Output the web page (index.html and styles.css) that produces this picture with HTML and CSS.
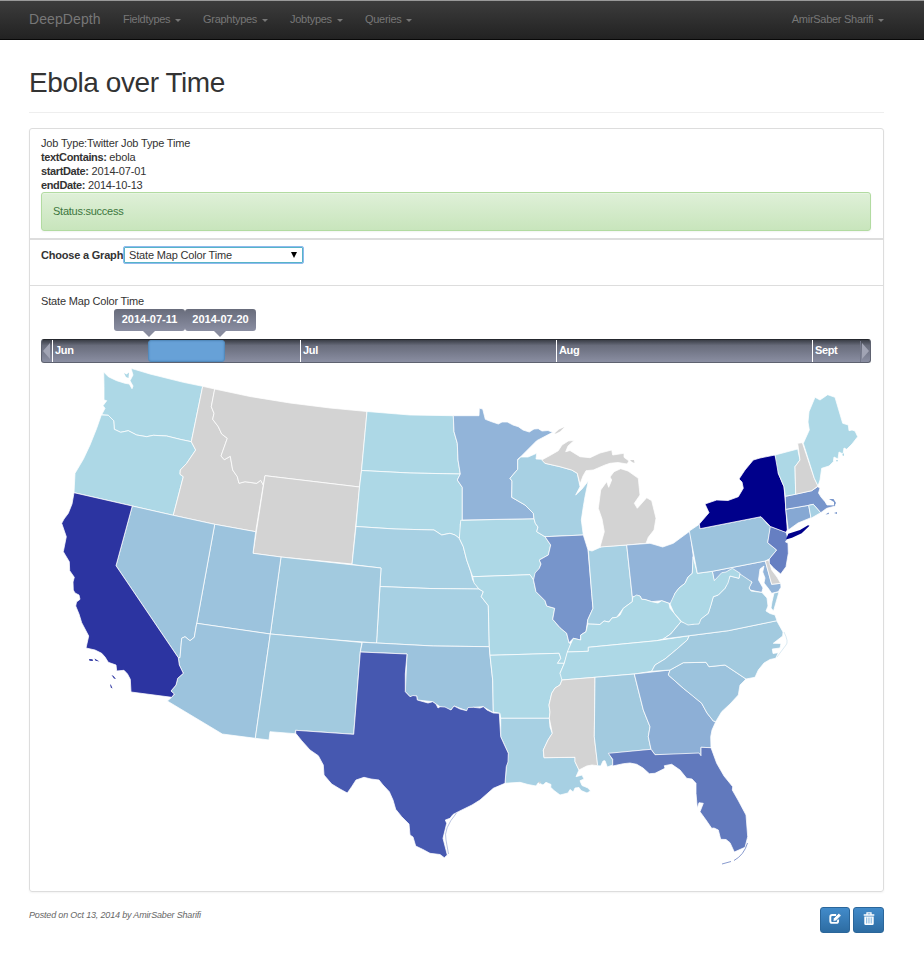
FILE: index.html
```html
<!DOCTYPE html>
<html lang="en">
<head>
<meta charset="utf-8">
<title>Ebola over Time</title>
<link rel="stylesheet" href="styles.css">
</head>
<body>
<nav class="navbar">
  <a class="brand">DeepDepth</a>
  <ul class="menu">
    <li class="m1">Fieldtypes <i class="caret"></i></li>
    <li class="m2">Graphtypes <i class="caret"></i></li>
    <li class="m3">Jobtypes <i class="caret"></i></li>
    <li>Queries <i class="caret"></i></li>
  </ul>
  <div class="user">AmirSaber Sharifi <i class="caret"></i></div>
</nav>
<main class="container">
  <header class="page-header"><h1>Ebola over Time</h1></header>
  <section class="panel">
    <div class="details">
      <div>Job Type:Twitter Job Type Time</div>
      <div><b>textContains:</b> ebola</div>
      <div><b>startDate:</b> 2014-07-01</div>
      <div><b>endDate:</b> 2014-10-13</div>
      <div class="alert">Status:success</div>
    </div>
    <div class="chooser">
      <b class="chooser-label">Choose a Graph</b>
      <div class="select"><span>State Map Color Time</span><i class="select-arrow"></i></div>
    </div>
    <div class="graph">
      <div class="graph-title">State Map Color Time</div>
      <div class="slider">
        <div class="tip tip-from">2014-07-11</div>
        <div class="tip tip-to">2014-07-20</div>
        <div class="track">
          <div class="arrow arrow-left"></div>
          <div class="month jun">Jun</div>
          <div class="month jul">Jul</div>
          <div class="month aug">Aug</div>
          <div class="month sept">Sept</div>
          <div class="arrow arrow-right"></div>
          <div class="range"></div>
        </div>
      </div>
      <svg class="map" viewBox="41 363 830 522" width="830" height="522">
        <path class="c0" d="M103.700 372L108.300 376.700 116.700 380.700 125 383.300 129.300 384 132 388.700 133 386 130 380.700 133 375 131 368.300 150 374 183.300 382.300 202.700 386.300 191.300 441.700 180 439.300 166.700 436 153.300 435.300 146.700 436.700 136.700 435 128.300 430.700 120.700 432.300 114.300 429.300 113.700 420.700 108.300 415.300 101.700 414.700 105 408.300 103 405.700 106.700 400.700 104 400 104 386.700Z"/>
        <path class="c0" d="M101.300 415L96.700 428.300 90 445 83.300 459.300 75 473.300 74 492.700 173.300 515.300 183.300 476.700 180 474.300 180.300 470 186.700 463.300 195.700 450 191.300 441.700 180 439.300 166.700 436 153.300 435.300 146.700 436.700 136.700 435 128.300 430.700 120.700 432.300 114.300 429.300 113.700 420.700 108.300 415.300Z"/>
        <path class="na" d="M202.700 386.300L214.700 389 211.300 406.700 214 413.300 212.700 419.300 218.300 426.700 221.700 434 227.300 438.300 221 456 224.300 459.700 230.300 456.300 232.700 470 237.300 476.700 239 483.300 245 481.700 256.700 483.300 260.700 480.300 263.300 485 255.700 531.700 214.700 524.300 173.300 515.300 183.300 476.700 180 474.300 180.300 470 186.700 463.300 195.700 450 191.300 441.700Z"/>
        <path class="na" d="M214.700 389L250 396.500 290 403 330 408 367 411.500 361.500 470.500 359.500 487 265 475.700 263.300 485 260.700 480.300 256.700 483.300 245 481.700 239 483.300 237.300 476.700 232.700 470 230.300 456.300 224.300 459.700 221 456 227.300 438.300 221.700 434 218.300 426.700 212.700 419.300 214 413.300 211.300 406.700Z"/>
        <path class="na" d="M265 475.700L359.500 487 352 564 281 557 253 553.300Z"/>
        <path class="c0" d="M367 411.500L410 415 453.300 415.700 454 431.700 457.300 443.300 458 460 460.300 474 410 473 361.500 470.500Z"/>
        <path class="c0" d="M361.500 470.500L410 473 460.300 474 457.300 480 462.300 487.300 462.300 520 460.300 524 460.700 531.700 459.300 538.300 455 535 450 533.300 441.700 535 434 530 395 529 356 526.500 359.500 487Z"/>
        <path class="c1" d="M356 526.500L395 529 434 530 441.700 535 450 533.300 455 535 459.300 538.300 463.300 546.700 466.700 560 470.700 571.700 472.700 580 479 589 430 588.500 380 586.500 381 568 352 564.500Z"/>
        <path class="c1" d="M380 586.500L430 588.500 479 589 483.300 591.700 481.300 596.700 488.300 605.700 489.300 646.700 433.300 646 376.500 643Z"/>
        <path class="c2" d="M281 557L381 568 376.500 643 330 639.500 270.300 634Z"/>
        <path class="c3" d="M214.700 524.300L255.700 531.700 253 553.300 281 557 270.300 634 196.700 623.300Z"/>
        <path class="c3" d="M132.300 506L173.300 515.300 214.700 524.300 196.700 623.300 194.300 637.300 190 640.700 185 636.700 181.700 638.300 180 657.700 178.300 657.700 116 565.700Z"/>
        <path class="c3" d="M196.700 623.300L270.300 634 255.300 738.300 222.300 734 167.300 701 171.700 697.300 174.300 694 171 691 176 685 177.700 678.300 183.300 673.300 179.300 665 178.300 657.700 180 657.700 181.700 638.300 185 636.700 190 640.700 194.300 637.300Z"/>
        <path class="ca" d="M74 492.700L132.300 506 116 565.700 178.300 657.700 179.300 665 183.300 673.300 177.700 678.300 176 685 171 691 174.300 694 171.700 697.300 131 692 130.300 679.300 127.500 674 124 670.300 116.700 671 116 665 108.300 662.300 105 657 101.700 653.300 95 650 86 648 88.700 636 81.700 622.700 79 614 75.700 606 76.500 602 80 599.300 79 595 75 593 73.300 590 73 582 74.300 577.300 69.700 570.700 69.300 561.700 63.300 551.700 66.300 536.700 61.700 523.300 64 519 68.300 513.300 72 504Z"/>
        <path class="c2" d="M270.300 634L330 639.500 362 642.500 360.300 652 353.700 734.300 295.700 730.300 295 733.700 270 731.700 269 740 255.300 738.300Z"/>
        <path class="c3" d="M362.300 642.300L376.500 643 433.300 646 489.300 646.700 490 655.300 492.700 680 493.300 712.700 483.300 706.700 473.300 707.300 466.700 710.700 454 706 451 710 440 706.700 432.700 701.700 417.300 700 416.700 696 410 696.700 405.300 691.700 407 654 360.300 652Z"/>
        <path class="c0" d="M460.700 520.300L534 518.700 535.300 523.300 538 527 536.700 531.700 545 536.700 550.700 545 548.300 555 539.300 560 541 564 539.300 568.300 533.300 580 530 574.700 472.700 576.700 466.700 560 463.300 546.700 459.300 538.300Z"/>
        <path class="c0" d="M472.700 576.700L530 574.700 533.500 580 536 591.700 545 600.700 546.700 606 554.700 608.300 552.700 619.300 560 627.700 566.700 633.300 569 642.700 570.700 644 567.300 653.300 564.300 663.300 557.300 663.300 560.700 658.300 559 653.300 490 655.300 489.300 646.700 488.300 605.700 481.300 596.700 483.300 591.700 479 589 474 583Z"/>
        <path class="c0" d="M490 655.300L559 653.300 560.700 658.300 557.300 663.300 564.300 663.300 560 673.300 563 676 562 680 560 685 555 688 551.700 693.300 549 705 550 712 549.300 718.300 500.700 718.300 500 713.300 493.300 712 492.700 680Z"/>
        <path class="c1" d="M500.700 718.300L549.300 718.300 550 727 552.300 733.300 548 740 543.300 750 544 757.700 575 757.300 575 761.700 579 770 576 776.700 582 775 584 779 580 780.700 582 785.500 588 788 590.500 791 587 793 581 790.500 579 787.500 575 788 573.300 792 570 789.500 568 793 560 795 554 790.500 550.700 787.300 551 784.500 546 782.300 543 785 538.300 782.700 536 786 528 784.500 520 782.300 505 783.300 506.300 766.700 508.300 753.300 500.700 736.700Z"/>
        <path class="tx" d="M360.300 652L407 654 405.300 674 405.300 691.700 410 696.700 413 695.500 416.700 696 417.300 700 428 703 432.700 701.700 436 704 438 708 440 706.700 445 707 451 710 454 706 460 709 466.700 710.700 468 707.500 473.300 707.300 480 708 483.300 706.700 487 710 493.300 713 499.300 713.300 500.700 736.700 504 744 508.300 753.300 508 762 506.300 766.700 505 783.300 493.300 788.300 480 800 472 805 458.300 811.700 453 814.500 450 818.300 445.300 820 446.700 823.300 443 838.300 447.300 855 444.300 857.700 440 854.500 430 853.300 423 849.500 415.700 846 413 837 410 835 409 824 401.700 816.700 395.700 809.300 393 800 389.300 791.700 383 785 379 780 371 779 364 777.300 356 780 351.700 786.700 347.300 793 340 789 331.700 784 324 775 323.300 765 318.300 755.700 310 750 301.700 740.700 295.700 733.300 295.700 730.300 353.700 734.300Z"/>
        <path class="c4" d="M453.300 415.700L479 415.700 479.300 408.300 482.700 409 485.300 419.300 491 421.500 498.300 424 502 422 507.300 422 513 425 518.300 426.700 523 430 529.300 432 534 429 538.300 428.700 542 431 548 430.500 552.700 432.300 536.700 440.700 520.700 456.700 517.700 459.300 517.700 469.300 510 478.300 512 481 511.700 497.300 525 505 533.300 513.300 534 518.700 462.300 520 462.300 487.300 457.300 480 460.300 474 458 460 457.300 443.300 454 431.700Z"/>
        <path class="c1" d="M517.700 460L520.700 457 528 457 536.700 453.300 536 459 541.700 459.300 545 463.300 560 466.700 571.700 470 577.300 473.300 579 481.700 580 486.700 575.700 495 582 489 588.300 481 585 496.700 583.300 506.700 581.300 520 583.300 535 545 536.700 536.700 531.700 538 527 535.300 523.300 534 518.700 533.300 513.300 525 505 511.700 497.300 512 481 510 478.300 517.700 469.300Z"/>
        <path class="c6" d="M545 536.700L583.300 535 588 550 591.700 593.300 593 608.300 587.700 620 586 631.700 580.700 635 580.700 640 573.300 638.300 569 642.700 566.700 633.300 560 627.700 552.700 619.300 554.700 608.300 546.700 606 545 600.700 536 591.700 533.500 580 535 573 539.300 568.300 541 564 539.300 560 548.300 555 550.700 545Z"/>
        <path class="c1" d="M588.300 550L592 551 601.700 546.700 626.700 545 632.300 596.700 632.300 601.700 623.300 608.300 616.700 617.300 612 618 609 622 604 621 600 624.500 587.700 624 587.700 620 593 608.300 591.700 593.300Z"/>
        <path class="na" d="M600 547L604.300 531.700 602 519 598.300 508.300 600.700 490 606.700 481.700 608.700 487.300 611.700 480 610 477 614 471.700 620.700 468.700 628 471 638.300 478.300 640 495 634.300 503.300 637.300 508.300 642 503 646.700 497.700 651.700 500.700 656 518.300 654 530 648.300 537.300 646 543.300 626.700 545Z"/>
        <path class="na" d="M541.700 460L550 455.500 558.300 450.700 562 445 568.300 441 574.300 440.300 568 446 565.700 451.700 570 450.500 580 456.700 590 457.700 600 453 611.700 450 612.700 455 624 453.300 624 457.300 629 461 627 464 618 462.500 610 463.300 605 465 598 468 593.300 470 586 470.700 583 476 580 484 577.300 473.300 571.700 470 560 466.700 545 463.300Z"/>
        <path class="c4" d="M626.700 545L650 543.300 656 545 662.700 547 673.300 543.300 690 531 693.300 556.700 692.300 573.300 688 577 685 583.300 679 588 675 593.300 672.300 603.300 669 603.300 661.700 600.700 651.700 601.700 645 599.500 641.700 599.300 640 596 632.300 596.700Z"/>
        <path class="c0" d="M567.300 652L588.300 651.300 588.300 647.300 656.700 640.700 663.300 639 670.700 634 681 621.700 674 613 670 608.300 669 603.300 661.700 600.700 658 603 651.700 601.700 645 599.500 641.700 599.300 640 596 636.700 595 632.700 597.300 632.300 601.700 623.300 608.300 620 615 616.700 617.300 612 618 609 622 604 621 600 624.500 587.700 624 586 631.700 580.700 635 580.700 640 573.300 638.300 570.700 644Z"/>
        <path class="c0" d="M689.300 635.700L656.700 640.700 588.300 647.300 588.300 651.300 567.300 652 564.300 663.300 560 673.300 562 680 595 677.300 634.300 674 651.700 671.300 655 665 665 659 676.700 649.300 687.300 640Z"/>
        <path class="na" d="M562 680L595 677.300 594.300 736.700 597.700 765.700 592 765 586.700 766 579 770 575 761.700 575 757.300 544 757.700 543.300 750 548 740 552.300 733.300 549.300 718.300 550 712 549 705 551.700 693.300 555 688 560 685Z"/>
        <path class="c2" d="M595 677.300L634.300 674 643.300 710 650 726.700 648.300 736.700 651 749.300 609 753.700 612.700 760 612.700 765 607.300 767 605 760.700 603 761 600.700 766 597.700 765.700 594.300 736.700Z"/>
        <path class="c5" d="M634.300 674L670 670 668.300 675 674 680 683.300 688.300 692 695 701.700 703.300 707 713 713.300 721 715.700 721.700 712 730 710.700 736.700 711 747.700 701 747.300 701 755.700 655 754.700 651 749.300 648.300 736.700 650 726.700 643.300 710Z"/>
        <path class="fl" d="M608.300 753.300L651 749.300 655 754.700 699 753 701 755.700 701 747.300 711 747.700 716.700 763.300 724 776 732.700 786.700 732.300 790 738 800 746 815 747.700 836.700 745 847.300 734.300 852 730 842.700 726 839.500 720.700 839.300 718.300 830 714 828 711.700 828.300 706 820 700 811.700 703.300 803.300 699 802.700 697.300 808.300 696 793.300 696 783.300 692 779 686.700 778.300 680 770 671.700 764.300 664.300 765.700 665 768.300 655 773.300 649.300 773.700 643 768 636.700 764.300 630 763 623.300 763.700 612.700 766 612.700 759.300Z"/>
        <path class="keys" d="M747.500 843Q744 855 734 860.500M731 861.500L722 864"/>
        <path class="c3" d="M670 670L683.300 662.700 706 662.300 709 666.700 725 665 746 679 740 685 738.300 695 730 704 721.700 711.700 715.700 721.700 713.300 721 707 713 701.700 703.300 683.300 688.300 668.300 675Z"/>
        <path class="c2" d="M651.700 671.300L655 665 665 659 676.700 649.300 687.300 640 689.300 635.700 728.300 630.700 776.700 620.700 783 632 782.700 636 773.300 643.300 781 643.500 780 648 772.300 649 773 653.500 778.300 652.700 775.700 658.300 770 659.500 764 663 758.300 670 755 677.300 746 679 725 665 709 666.700 706 662.300 683.300 662.700 670 670Z"/>
        <path class="banks" d="M784 632Q789 642 786 645L777 657"/>
        <path class="c4" d="M712.300 571.300L765.300 561 771.700 584.300 780.700 583.300 781 587.300 778.300 591.700 771.700 593.300 768 588 764 583 765 578 762.700 572 764 566 760 569 758.500 580 763 588 761.700 592.500 750 590 749 587 752 582 739.300 576.700 731.700 572 714.300 582Z"/>
        <path class="c2" d="M663.300 639L670.700 634 681 621.700 693.300 624.300 708.300 613.300 713.300 596.700 718.300 595 725 588.300 730 576 739 578.300 740 574 752 582 749 588 751 591 762 592.500 767 598 768 606 766 611 770 613.500 775 615 777 620.700 728.300 630.700 689.300 635.700ZM779 592L773.500 611 771 608 772 601.700 774 593Z"/>
        <path class="c0" d="M693 556.700L697.300 573.300 712.300 571.300 714.300 580.700 721.700 572.700 726 572 732.300 568.300 740 573.300 739 578.300 730 576 728 583 725 588.300 718.300 595 713.300 596.700 711 605 708.300 613.300 701 619 699 624 693.300 624.300 688 625 681.700 621.700 674 613 670 604 675 593.300 679 588 685 583.300 688 577 692.300 573.300Z"/>
        <path class="c3" d="M689.300 531L699.300 524.300 700 528.700 761 516.700 767.300 524 770.700 526.700 767.700 542.700 776.700 550 769.300 559 765.300 561 712.300 571.300 697.300 573.300Z"/>
        <path class="na" d="M765.300 561L768.700 560 771.700 570 777 577 780.700 583.300 771.700 584.300Z"/>
        <path class="nj" d="M770.300 526.500L786 532 787.700 538 785.500 542 788 543 788.300 553.300 786 566.700 780.700 574 774 568.500 769.300 563.300 769.300 559 776.700 550 767.700 542.700Z"/>
        <path class="ny" d="M700 528.700L699.300 524 709 512.700 705 504 716.700 500 728 500.500 738.300 496.700 743.300 488.300 742 482 739 479 745 470 753.300 460 760 458 775 455 778.300 463 778.300 473.300 784 486.700 785.700 506.700 787.300 530 785.700 532.300 770.500 526.500 761 516.700Z"/>
        <path class="ny islet" d="M786 539.500L788.300 533.800 800 530 808 525.300 809.500 525.800 801.700 533.300 792 537.800Z"/>
        <path class="ct" d="M785.700 509.300L808.700 505.300 811 517.700 798 523 788.300 530Z"/>
        <path class="c6" d="M785.300 496.300L811.700 490.700 817.700 486.700 820 488 818.500 493 821 497 825 501.700 827 505 834 505 835 501 835.500 506 826.700 508.300 820.700 512.700 813.300 504.300 808.700 505.300 785.700 509.300Z"/>
        <path class="c6 islet" d="M829 499L833.500 499 836 503 834 506 834 502ZM825.500 514.500L828.500 512.500 829 514ZM834 513L837 512 837 514Z"/>
        <path class="c1" d="M808.700 505.300L813.300 504.300 820.700 512.700 811 518.300Z"/>
        <path class="c0" d="M775 455L797.700 449 800 460 795 466.700 795.700 494.300 785.300 496.300 784 486.700 778.300 473.300Z"/>
        <path class="na" d="M797.700 443.300L802.300 442.700 814.300 478.300 818 486 811.700 490.700 795.700 494.300 795 466.700 800 460Z"/>
        <path class="c0" d="M803.300 443.300L809.300 430 808 422 809 411.700 815 397.300 820 400 827.700 394.700 835 397.300 842.700 423.300 848.300 425 849 430.700 852 430 855 431 857.700 436.700 852 444 846.700 449.300 844 448 843 454 839 452 838 459 834 457 833.300 461.700 829 466 821.700 468.300 820 480 818 486 814.300 478.300Z"/>
        <path class="c0 islet" d="M124 373L126.500 374.500 129 372.500 128.500 378 126 377ZM842 455L844 453 844 456ZM836 460L838 460 837 462Z"/>
        <path class="ca islet" d="M89 659L92.500 659.300 93 661 89.500 660.800ZM94.500 658.500L99.500 661.500 95.500 660.800ZM111.500 675L113.500 676 116 679 114 678.500ZM110 684L111.300 685.500 112.500 688.500 110.800 687.500Z"/>
        <path class="na islet" d="M554.500 433.500L559 429.500 564.500 427 560 431.500 556 433.500ZM630 460L634 460 634.500 463 632 462ZM538.300 782L541 781.500 539.500 784Z"/>
        <path class="barrier" d="M456.500 813Q443 829 446 840L448.500 854"/>
      </svg>
    </div>
  </section>
  <footer class="footer">
    <em>Posted on Oct 13, 2014 by AmirSaber Sharifi</em>
    <div class="actions">
      <button class="btn edit" type="button"><svg viewBox="0 0 14 14" width="14" height="14"><path d="M8.200 3H4.200Q2.300 3 2.300 4.900V9Q2.300 10.900 4.200 10.900H8.200Q10.100 10.900 10.100 9V7.500" fill="none" stroke="#fff" stroke-width="1.900"/><path d="M5 9.300L5.500 6.500 10.800 1.200 13.200 3.500 7.800 8.900Z" fill="#fff" stroke="#3477b4" stroke-width=".6"/></svg></button>
      <button class="btn trash" type="button"><svg viewBox="0 0 12 14" width="12" height="14"><path d="M4 2.500V.8H8V2.500M.7 3H11.300" fill="none" stroke="#fff" stroke-width="1.300"/><path d="M1.300 4.500H10.700V11.500Q10.700 13 9.500 13H2.500Q1.300 13 1.300 11.500Z" fill="#fff"/><path d="M3.500 5.500V11.500M5.200 5.500V11.500M6.900 5.500V11.500M8.600 5.500V11.500" stroke="#65a6d8" stroke-width=".7"/></svg></button>
    </div>
  </footer>
</main>
</body>
</html>
```
FILE: styles.css
```css
* { box-sizing: border-box; }
body { margin: 0; background: #fff; color: #333; font: 11px/14px "Liberation Sans", Arial, sans-serif; letter-spacing: -.17px; }
b { letter-spacing: -.37px; }
.navbar { height: 40px; padding: 0 40px 2px 29px; display: flex; align-items: center; color: #777; letter-spacing: -.28px; border-top: 1px solid #999; border-bottom: 1px solid #080808; background: linear-gradient(#3c3c3c, #222); }
.brand { width: 94px; font-size: 14px; letter-spacing: .1px; }
.menu { display: flex; margin: 0; padding: 0; list-style: none; }
.m1 { width: 80px; }
.m2 { width: 87px; }
.m3 { width: 75px; }
.user { margin-left: auto; }
.caret { display: inline-block; margin-left: 2px; vertical-align: middle; border: 3px solid transparent; border-top-color: #777; border-bottom: 0; }
.container { margin: 0 40px 0 29px; }
.page-header { height: 73px; padding-top: 27px; border-bottom: 1px solid #eee; }
h1 { margin: 0; font-size: 28px; line-height: 32px; font-weight: 400; letter-spacing: -.43px; }
.panel { height: 764px; margin-top: 15px; border: 1px solid #ddd; border-radius: 3px; box-shadow: 0 1px 2px rgba(0,0,0,.05); }
.details { height: 111px; padding: 7px 12px 0 11px; border-bottom: 2px solid #ddd; }
.alert { height: 39px; padding: 11px; color: #3c763d; letter-spacing: -.25px; border: 1px solid #b2dba1; border-radius: 3px; background: linear-gradient(#dff0d8, #c8e5bc); box-shadow: inset 0 1px 0 rgba(255,255,255,.25), 0 1px 2px rgba(0,0,0,.05); }
.chooser { height: 46px; padding: 6px 11px; border-bottom: 1px solid #ddd; display: flex; align-items: flex-start; }
.chooser-label { width: 82px; margin-top: 2px; white-space: nowrap; letter-spacing: -.2px; }
.select { width: 181px; height: 18px; padding: 0 6px 0 5px; display: flex; align-items: center; justify-content: space-between; border: 1px solid #8fb9ee; box-shadow: inset 0 0 0 1px #56b4c8; border-radius: 2px; background: #fff; }
.select-arrow { border: 3.500px solid transparent; border-top: 6px solid #000; border-bottom: 0; }
.graph { padding: 8px 12px 0 11px; }
.slider { position: relative; padding-top: 31px; }
.track { position: relative; height: 24px; border: 1px solid #5e6270; border-top-color: #25282e; border-radius: 3px; color: #fff; font-weight: 700; background: linear-gradient(#3a3e47, #686c7b 25%, #8a8ea2); }
.month { position: absolute; top: 0; height: 22px; padding: 3px 0 0 2px; border-left: 1px solid #fff; letter-spacing: -.35px; }
.jun { left: 10px; }
.jul { left: 258px; }
.aug { left: 514px; }
.sept { left: 770px; }
.range { position: absolute; left: 106px; top: 0; width: 77px; height: 22px; border: 1px solid #528abc; border-radius: 3px; background: #67a1d7; box-shadow: inset 0 0 2px #4d87bb; }
.arrow { position: absolute; top: 3px; border: 8px solid transparent; }
.arrow-left { left: 1px; border-left: 0; border-right: 7px solid #a1a4b4; }
.arrow-right { right: 1px; border-right: 0; border-left: 7px solid #a1a4b4; }
.arrow-right::before { content: ""; position: absolute; left: -9px; top: -10px; height: 21px; border-left: 1px solid #74788a; }
.tip { position: absolute; top: 1px; width: 71px; height: 22px; border-radius: 3px; color: #fff; font-weight: 700; line-height: 21px; text-align: center; letter-spacing: 0; background: linear-gradient(#686c7b, #8a8ea2); }
.tip::after { content: ""; position: absolute; left: 29px; top: 22px; border: 6px solid transparent; border-top-color: #878b9e; border-bottom: 0; }
.tip-from { left: 73px; }
.tip-to { left: 144px; }
.map { display: block; }
.map path { stroke: #fff; stroke-opacity: .75; stroke-width: 1; stroke-linejoin: round; }
.map .islet { stroke: none; }
.na { fill: #d3d3d3; }
.c0 { fill: #add8e6; }
.c1 { fill: #a7d0e3; }
.c2 { fill: #a2cadf; }
.c3 { fill: #9cc3dd; }
.c4 { fill: #92b4d9; }
.c5 { fill: #8dafd6; }
.c6 { fill: #7795cb; }
.ct { fill: #86a8d3; }
.nj { fill: #667fc2; }
.fl { fill: #6179bd; }
.tx { fill: #4658b0; }
.ca { fill: #2c34a1; }
.ny { fill: #00008b; }
.map .keys, .map .barrier, .map .banks { fill: none; stroke: #8a9acb; stroke-width: .8; }
.map .keys { stroke: #6179bd; stroke-width: 1; }
.map .banks { stroke: #c3dcea; }
.footer { display: flex; justify-content: space-between; padding-top: 15px; }
.footer em { margin-top: 1px; font-size: 9px; color: #666; }
.actions { display: flex; gap: 3px; }
.btn { width: 30px; height: 26px; padding: 0 0 2px; display: flex; align-items: center; justify-content: center; border: 1px solid #2b669a; border-radius: 3px; background: linear-gradient(#428bca, #2d6ca2); }
.trash { width: 31px; }
```
